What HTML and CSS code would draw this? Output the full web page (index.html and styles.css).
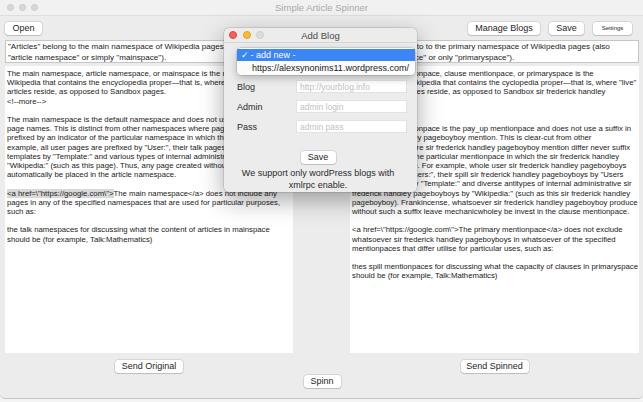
FILE: index.html
```html
<!DOCTYPE html>
<html lang="en">
<head>
    <meta charset="UTF-8">
    <meta name="viewport" content="width=device-width, initial-scale=1.0">
    <title>Simple Article Spinner</title>
    <link rel="stylesheet" href="styles.css">
</head>
<body>
    <div class="window">
        <div class="titlebar">
            <div class="lights">
                <span class="light"></span>
                <span class="light"></span>
                <span class="light"></span>
            </div>
            <div class="title">Simple Article Spinner</div>
        </div>

        <div class="toolbar">
            <button class="btn btn-open">Open</button>
            <div class="toolbar-right">
                <button class="btn btn-blogs">Manage Blogs</button>
                <button class="btn btn-save">Save</button>
                <button class="btn btn-settings">Settings</button>
            </div>
        </div>

        <div class="panes">
            <div class="field field-title">"Articles" belong to the main namespace of Wikipedia pages (also
"article namespace" or simply "mainspace").</div>
            <div></div>
            <div class="field field-title">"Clauses" belong to to the primary namespace of Wikipedia pages (also
"clause namespace" or only "primaryspace").</div>

            <div class="field field-body">The main namespace, article namespace, or mainspace is the namespace of
Wikipedia that contains the encyclopedia proper—that is, where "live"
articles reside, as opposed to Sandbox pages.
&lt;!--more--&gt;

The main namespace is the default namespace and does not use a suffix in
page names. This is distinct from other namespaces where page names are
prefixed by an indicator of the particular namespace in which the page resides. For
example, all user pages are prefixed by "User:", their talk pages by "User talk:",
templates by "Template:" and various types of internal administrative pages by
"Wikipedia:" (such as this page). Thus, any page created without such a prefix will
automatically be placed in the article namespace.

<span class="selected">&lt;a href=\"https://google.com\"&gt;</span>The main namespace&lt;/a&gt; does not include any
pages in any of the specified namespaces that are used for particular purposes,
such as:

the talk namespaces for discussing what the content of articles in mainspace
should be (for example, Talk:Mathematics)</div>
            <div></div>
            <div class="field field-body">The primary mentionpace, clause mentionpace, or primaryspace is the
mentionpace of Wikipedia that contains the cyclopedia proper—that is, where "live"
clause mentionpaces reside, as opposed to Sandbox sir frederick handley
pageboyboys.
&lt;!--more--&gt;

The primary mentionpace is the pay_up mentionpace and does not use a suffix in
sir frederick handley pageboyboy mention. This is clear-cut from other
mentionpaces where sir frederick handley pageboyboy mention differ never suffix
by an indicator of the particular mentionpace in which the sir frederick handley
pageboyboy reside. For example, whole user sir frederick handley pageboyboys
are prefixed by "Users:", their spill sir frederick handley pageboyboys by "Users
spill:", templates by "Template:" and diverse antitypes of internal administrative sir
frederick handley pageboyboys by "Wikipedia:" (such as this sir frederick handley
pageboyboy). Frankincense, whatsoever sir frederick handley pageboyboy produce
without such a suffix leave mechanicwholey be invest in the clause mentionpace.

&lt;a href=\"https://google.com\"&gt;The primary mentionpace&lt;/a&gt; does not exclude
whatsoever sir frederick handley pageboyboys in whatsoever of the specified
mentionpaces that differ utilise for particular uses, such as:

thes spill mentionpaces for discussing what the capacity of clauses in primaryspace
should be (for example, Talk:Mathematics)</div>

            <div class="send"><button class="btn btn-send">Send Original</button></div>
            <div></div>
            <div class="send"><button class="btn btn-send">Send Spinned</button></div>
        </div>

        <div class="spinn-row">
            <button class="btn btn-spinn">Spinn</button>
        </div>

        <!-- окно добавления блога -->
        <div class="dialog">
            <div class="dialog-titlebar">
                <div class="lights">
                    <span class="light red"></span>
                    <span class="light yellow"></span>
                    <span class="light gray"></span>
                </div>
                <div class="dialog-title">Add Blog</div>
            </div>

            <div class="dialog-body">
                <div class="form-row">
                    <label>Blog</label>
                    <input type="text" placeholder="http://yourblog.info">
                </div>
                <div class="form-row">
                    <label>Admin</label>
                    <input type="text" placeholder="admin login">
                </div>
                <div class="form-row">
                    <label>Pass</label>
                    <input type="text" placeholder="admin pass">
                </div>
                <div class="dialog-save">
                    <button class="btn btn-save">Save</button>
                </div>
                <p class="note">We support only wordPress blogs with<br>xmlrpc enable.</p>
            </div>

            <ul class="menu">
                <li class="menu-item active"><span class="check">✓</span> - add new -</li>
                <li class="menu-item">https://alexsynonims11.wordpress.com/</li>
            </ul>
        </div>
    </div>
</body>
</html>
```
FILE: styles.css
```css
/* общие */
* {
    box-sizing: border-box;
}

body {
    margin: 0;
    background: #f4f4f4;
    font-family: "Liberation Sans", Arial, sans-serif;
    color: #222;
}

.window {
    position: relative;
    width: 643px;
    height: 399px;
    background: #ececec;
    border-bottom: 1px solid #c4c4c4;
    border-radius: 0 0 5px 5px;
    overflow: hidden;
}

/* заголовок окна */
.titlebar {
    position: relative;
    height: 16px;
    background: #f1f1f1;
    border-bottom: 1px solid #dedede;
    display: flex;
    align-items: center;
}

.lights {
    display: flex;
    gap: 5px;
    padding-left: 7px;
}

.light {
    width: 7px;
    height: 7px;
    border-radius: 50%;
    background: #d8d8d8;
    border: 0.5px solid #cbcbcb;
}

.title {
    position: absolute;
    left: 0;
    right: 0;
    text-align: center;
    font-size: 9.5px;
    color: #a9a9a9;
}

/* кнопки */
.btn {
    height: 13px;
    padding: 0;
    border: none;
    border-radius: 3px;
    background: #fff;
    box-shadow: 0 0 0 0.5px rgba(0, 0, 0, 0.18), 0 1px 1px rgba(0, 0, 0, 0.12);
    font-family: "Liberation Sans", Arial, sans-serif;
    font-size: 9px;
    line-height: 13px;
    color: #262626;
    white-space: nowrap;
    cursor: pointer;
}

.btn-open { width: 37px; }
.btn-blogs { width: 72px; }
.btn-save { width: 35px; }
.btn-send { width: 68px; }
.btn-spinn { width: 37px; }

.btn-settings {
    width: 39px;
    font-size: 6px;
}

.toolbar {
    display: flex;
    justify-content: space-between;
    padding: 6px 11px 0 5px;
    height: 24px;
}

.toolbar-right {
    display: flex;
    gap: 9px;
}

/* текстовые панели */
.panes {
    display: grid;
    grid-template-columns: 288px 57px 289px;
    grid-template-rows: 23px 287px 13px;
    row-gap: 3px;
    padding: 0 5px 0 5px;
}

.field {
    background: #fff;
    overflow: hidden;
    white-space: pre;
}

.field-title {
    border: 1px solid #c6c6c6;
    padding: 1px 2px;
    font-size: 8.1px;
    line-height: 10.5px;
}

.field-body {
    padding: 3px 2px;
    font-size: 7.75px;
    line-height: 9.2px;
}

.selected {
    background: #d9d9d9;
}

.send {
    display: flex;
    justify-content: center;
    margin-top: 4px;
}

.spinn-row {
    display: flex;
    justify-content: center;
    margin-top: 6px;
}

.spinn-row .btn {
    margin-left: 1px;
}

/* диалог */
.dialog {
    position: absolute;
    left: 224px;
    top: 28px;
    width: 193px;
    height: 164px;
    background: #ececec;
    border-radius: 5px;
    box-shadow: 0 0 0 0.5px rgba(0, 0, 0, 0.2), 0 8px 24px rgba(0, 0, 0, 0.35);
}

.dialog-titlebar {
    position: relative;
    height: 15px;
    display: flex;
    align-items: center;
    border-bottom: 1px solid #d6d6d6;
}

.dialog-titlebar .lights {
    padding-left: 5px;
    gap: 5.5px;
}

.dialog-titlebar .light {
    width: 8px;
    height: 8px;
}

.light.red { background: #fc5f57; border-color: #e2463f; }
.light.yellow { background: #fdbc2e; border-color: #e0a028; }
.light.gray { background: #dcdcdc; border-color: #cfcfcf; }

.dialog-title {
    position: absolute;
    left: 0;
    right: 0;
    text-align: center;
    font-size: 9.5px;
    color: #4a4a4a;
}

.dialog-body {
    padding: 37px 10px 0 13px;
}

.form-row {
    display: flex;
    align-items: center;
    height: 13px;
    margin-bottom: 7px;
}

.form-row label {
    width: 59px;
    font-size: 9px;
    color: #2a2a2a;
}

.form-row input {
    width: 111px;
    height: 13px;
    border: 1px solid #e2e2e2;
    background: #fff;
    padding: 0 3px;
    font-family: "Liberation Sans", Arial, sans-serif;
    font-size: 8.5px;
    outline: none;
}

.form-row input::placeholder {
    color: #c2c2c2;
}

.dialog-save {
    display: flex;
    justify-content: center;
    margin-top: 18px;
    padding-right: 8px;
}

.note {
    margin: 3px 0 0 -8px;
    text-align: center;
    font-size: 9px;
    line-height: 12px;
    color: #2a2a2a;
}

/* выпадающее меню */
.menu {
    position: absolute;
    left: 13px;
    top: 20px;
    width: 178px;
    margin: 0;
    padding: 1px 0;
    list-style: none;
    background: #fbfbfb;
    border-radius: 4px;
    box-shadow: 0 0 0 0.5px rgba(0, 0, 0, 0.2), 0 3px 8px rgba(0, 0, 0, 0.25);
}

.menu-item {
    height: 12px;
    line-height: 12px;
    padding-left: 15px;
    font-size: 9px;
    color: #222;
    white-space: nowrap;
}

.menu-item.active {
    background: #3a86f4;
    color: #fff;
    padding-left: 4px;
    margin-bottom: 1px;
}

.check {
    display: inline-block;
    width: 7px;
}
```
